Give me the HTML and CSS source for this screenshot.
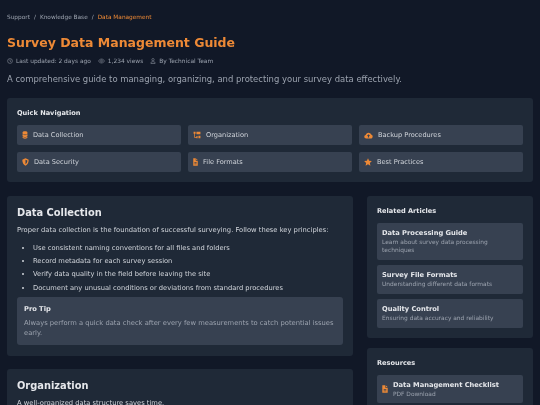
FILE: index.html
```html
<!DOCTYPE html>
<html lang="en">
<head>
<meta charset="utf-8">
<title>Survey Data Management Guide</title>
<link rel="stylesheet" href="styles.css">
</head>
<body>
<div class="page">
  <nav class="crumbs"><span>Support</span><span>/</span><span>Knowledge Base</span><span>/</span><span class="here">Data Management</span></nav>
  <h1>Survey Data Management Guide</h1>
  <div class="meta">
    <span class="m"><svg viewBox="0 0 12 12" class="mi"><circle cx="6" cy="6" r="4.800"/><path d="M6 3v3.200l2 1.200"/></svg>Last updated: 2 days ago</span>
    <span class="m"><svg viewBox="0 0 14 12" class="mi wide"><path d="M1 6c1.500-2.600 3.500-3.900 6-3.900s4.500 1.300 6 3.900c-1.500 2.600-3.500 3.900-6 3.900S2.500 8.600 1 6z"/><circle cx="7" cy="6" r="1.900"/></svg>1,234 views</span>
    <span class="m"><svg viewBox="0 0 12 12" class="mi"><circle cx="6" cy="3.400" r="2.400"/><path d="M1.800 11V9.800c0-1.300 1-2.300 2.300-2.300h3.800c1.300 0 2.300 1 2.300 2.300V11z"/></svg>By Technical Team</span>
  </div>
  <p class="lead">A comprehensive guide to managing, organizing, and protecting your survey data effectively.</p>

  <section class="card quick">
    <h3>Quick Navigation</h3>
    <div class="quick-grid">
      <a class="q"><svg viewBox="0 0 12 12" preserveAspectRatio="none" class="qi i-db"><path d="M1 2.500C1 1.300 3.300.5 6 .5s5 .8 5 2v.9c0 1.100-2.300 1.900-5 1.900S1 4.500 1 3.400zM1 5c1.100.8 3 1.200 5 1.200S9.900 5.800 11 5v2c0 1.100-2.300 1.900-5 1.900S1 8.100 1 7zM1 8.700c1.100.8 3 1.200 5 1.200s3.900-.4 5-1.200v.8c0 1.200-2.300 2-5 2s-5-.8-5-2z"/></svg>Data Collection</a>
      <a class="q"><svg viewBox="0 0 14 12" preserveAspectRatio="none" class="qi i-org"><path d="M1 1h3.500v3H3.400v5H6V7.500h2V11H6v-.8H2.200V4H1zM6 1h7v4H6zM9.500 7H13v4H9.500z"/></svg>Organization</a>
      <a class="q"><svg viewBox="0 0 14 12" preserveAspectRatio="none" class="qi i-cloud"><path d="M3.500 11C1.800 11 .5 9.700 .5 8c0-1.300.9-2.400 2.100-2.700C3 3 4.700 1.300 7 1.300c1.900 0 3.500 1.200 4 3 1.500.3 2.500 1.700 2.500 3.200 0 2-1.300 3.500-3 3.500z"/><path class="cut" d="M7 4 4.600 6.700h1.500v2.600h1.800V6.700h1.500z"/></svg>Backup Procedures</a>
      <a class="q"><svg viewBox="0 0 12 12" preserveAspectRatio="none" class="qi i-shield"><path fill-rule="evenodd" d="M6 .5 11.500 2.500c0 4.300-1.900 7.500-5.500 9-3.600-1.500-5.500-4.700-5.500-9zM6 2.600v6.800c2-1 3-3 3.200-5.600z"/></svg>Data Security</a>
      <a class="q"><svg viewBox="0 0 10 12" preserveAspectRatio="none" class="qi i-file"><path fill-rule="evenodd" d="M.5.500h5V4h4v7.500H.5zM6.500.7 9.300 3H6.500zM2.800 6v1.100h4.400V6zM2.800 8.300v1.100h4.400V8.300z"/></svg>File Formats</a>
      <a class="q"><svg viewBox="0 0 12 12" preserveAspectRatio="none" class="qi i-star"><path d="M6 .4 7.700 4.100 11.800 4.600 8.800 7.400 9.600 11.500 6 9.400 2.400 11.500 3.200 7.400.2 4.600 4.300 4.100z"/></svg>Best Practices</a>
    </div>
  </section>

  <div class="columns">
    <main class="col-main">
      <article class="card art">
        <h2>Data Collection</h2>
        <p>Proper data collection is the foundation of successful surveying. Follow these key principles:</p>
        <ul>
          <li>Use consistent naming conventions for all files and folders</li>
          <li>Record metadata for each survey session</li>
          <li>Verify data quality in the field before leaving the site</li>
          <li>Document any unusual conditions or deviations from standard procedures</li>
        </ul>
        <div class="tip">
          <h4>Pro Tip</h4>
          <p>Always perform a quick data check after every few measurements to catch potential issues early.</p>
        </div>
      </article>
      <article class="card art">
        <h2>Organization</h2>
        <p>A well-organized data structure saves time.</p>
      </article>
    </main>
    <aside class="col-side">
      <section class="card side">
        <h3>Related Articles</h3>
        <a class="item"><strong>Data Processing Guide</strong><small>Learn about survey data processing techniques</small></a>
        <a class="item"><strong>Survey File Formats</strong><small>Understanding different data formats</small></a>
        <a class="item"><strong>Quality Control</strong><small>Ensuring data accuracy and reliability</small></a>
      </section>
      <section class="card side">
        <h3>Resources</h3>
        <a class="item res"><svg viewBox="0 0 10 12" preserveAspectRatio="none" class="ri"><path fill-rule="evenodd" d="M.5.500h5V4h4v7.500H.5zM6.500.7 9.300 3H6.500zM2.800 6v1.100h4.400V6zM2.800 8.300v1.100h4.400V8.300z"/></svg><span><strong>Data Management Checklist</strong><small>PDF Download</small></span></a>
      </section>
    </aside>
  </div>
</div>
</body>
</html>
```

FILE: styles.css
```css
* { box-sizing: border-box; margin: 0; padding: 0; }
html, body { height: 405px; overflow: hidden; }
body { background: #111827; font-family: "DejaVu Sans", sans-serif; color: #d1d5db; }
.page { padding: 13px 7px 0; filter: blur(0.3px); }
.crumbs { display: flex; gap: 4px; font-size: 5.8px; line-height: 9px; color: #9ca3af; }
.crumbs .here { color: #ed8936; }
h1 { margin-top: 12px; font-size: 12.5px; line-height: 18px; font-weight: 700; color: #ed8936; white-space: nowrap; }
.meta { display: flex; gap: 7px; margin-top: 4.500px; font-size: 5.900px; line-height: 9px; color: #9ca3af; }
.m { display: flex; align-items: center; gap: 3px; }
.mi { width: 6px; height: 6px; fill: none; stroke: #9ca3af; stroke-width: 1; flex: none; }
.mi.wide { width: 7px; }
.lead { margin-top: 7.500px; font-size: 8.450px; line-height: 12px; color: #9ca3af; white-space: nowrap; }
.card { background: #1f2937; border-radius: 3px; }
.quick { margin-top: 13px; padding: 10px; height: 84px; }
.quick h3, .side h3 { font-size: 6.600px; line-height: 10px; font-weight: 700; color: #e5e7eb; }
.quick-grid { display: grid; grid-template-columns: repeat(3, 1fr); gap: 7px; margin-top: 7px; }
.q { display: flex; align-items: center; gap: 5px; height: 20px; padding: 0 5px; background: #374151; border-radius: 2px; font-size: 6.600px; color: #d1d5db; }
.qi { height: 8px; fill: #ed8936; flex: none; }
.i-db { width: 6px; }
.i-org { width: 8px; }
.i-cloud { width: 9px; height: 7px; }
.i-shield { width: 7px; }
.i-file { width: 5px; }
.i-star { width: 8px; }
.cut { fill: #374151; }
.columns { display: grid; grid-template-columns: 346px 166px; gap: 14px; margin-top: 14px; align-items: start; }
.col-main, .col-side { display: flex; flex-direction: column; }
.col-main { gap: 13px; }
.col-side { gap: 10px; }
.art { padding: 10px 10px 11px; }
.art h2 { font-size: 9.850px; line-height: 13.400px; font-weight: 700; color: #e5e7eb; }
.art > p { margin-top: 6px; font-size: 6.760px; line-height: 11px; color: #d1d5db; white-space: nowrap; }
.art ul { margin-top: 6.300px; padding-left: 16px; list-style: disc; font-size: 6.730px; line-height: 11px; color: #d1d5db; }
.art li { margin-bottom: 2.400px; }
.tip { margin-top: 3.400px; padding: 7px 7px 6px; background: #374151; border-radius: 3px; }
.tip h4 { font-size: 6.700px; line-height: 10px; font-weight: 700; color: #e5e7eb; }
.tip p { margin-top: 3.800px; font-size: 6.750px; line-height: 10.300px; color: #9ca3af; }
.side { padding: 10px; }
.side h3 { margin-bottom: 6.700px; }
.item { display: block; padding: 5px; margin-bottom: 5.400px; background: #374151; border-radius: 2px; }
.item:last-child { margin-bottom: 0; }
.item strong { display: block; font-size: 6.700px; line-height: 10px; font-weight: 700; color: #e5e7eb; }
.item small { display: block; font-size: 5.900px; line-height: 8.600px; color: #9ca3af; }
.res { display: flex; align-items: center; gap: 5px; }
.ri { width: 6px; height: 8px; fill: #ed8936; flex: none; }
```
